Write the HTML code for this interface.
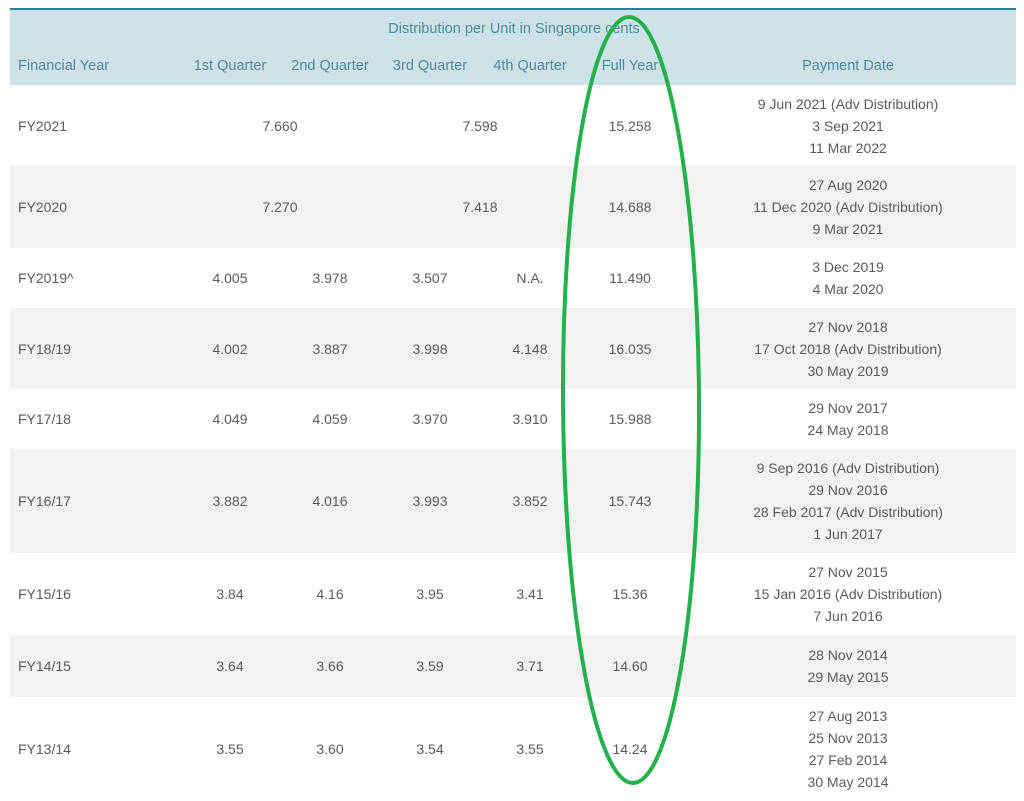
<!DOCTYPE html>
<html><head><meta charset="utf-8"><style>
body{margin:0;background:#fff;width:1024px;height:793px;overflow:hidden;position:relative;font-family:"Liberation Sans",sans-serif;font-size:14px;color:#5c5862}
table{position:absolute;left:10px;top:8px;width:1006px;border-collapse:collapse;table-layout:fixed;border-top:2px solid #2f7f93}
td,th{padding:0;text-align:center;vertical-align:middle;line-height:22px;font-weight:normal}
thead tr{background:#cde2e7;color:#4f8a9c;font-size:14.5px}
thead tr.t1{height:38px}thead tr.t2{height:38px}
td.l,th.l{text-align:left;padding-left:8px}
tr.g{background:#f2f2f2}
</style></head><body>
<table>
<colgroup><col style="width:170px"><col style="width:100px"><col style="width:100px"><col style="width:100px"><col style="width:100px"><col style="width:100px"><col style="width:336px"></colgroup>
<thead>
<tr class="t1"><th colspan="7" style="padding-left:2px">Distribution per Unit in Singapore cents</th></tr>
<tr class="t2"><th class="l">Financial Year</th><th>1st Quarter</th><th>2nd Quarter</th><th>3rd Quarter</th><th>4th Quarter</th><th>Full Year</th><th>Payment Date</th></tr>
</thead>
<tbody>
<tr style="height:81px"><td class="l">FY2021</td><td colspan="2">7.660</td><td colspan="2">7.598</td><td>15.258</td><td>9 Jun 2021 (Adv Distribution)<br>3 Sep 2021<br>11 Mar 2022</td></tr>
<tr class="g" style="height:82px"><td class="l">FY2020</td><td colspan="2">7.270</td><td colspan="2">7.418</td><td>14.688</td><td>27 Aug 2020<br>11 Dec 2020 (Adv Distribution)<br>9 Mar 2021</td></tr>
<tr style="height:60px"><td class="l">FY2019^</td><td>4.005</td><td>3.978</td><td>3.507</td><td>N.A.</td><td>11.490</td><td>3 Dec 2019<br>4 Mar 2020</td></tr>
<tr class="g" style="height:81px"><td class="l">FY18/19</td><td>4.002</td><td>3.887</td><td>3.998</td><td>4.148</td><td>16.035</td><td>27 Nov 2018<br>17 Oct 2018 (Adv Distribution)<br>30 May 2019</td></tr>
<tr style="height:60px"><td class="l">FY17/18</td><td>4.049</td><td>4.059</td><td>3.970</td><td>3.910</td><td>15.988</td><td>29 Nov 2017<br>24 May 2018</td></tr>
<tr class="g" style="height:104px"><td class="l">FY16/17</td><td>3.882</td><td>4.016</td><td>3.993</td><td>3.852</td><td>15.743</td><td>9 Sep 2016 (Adv Distribution)<br>29 Nov 2016<br>28 Feb 2017 (Adv Distribution)<br>1 Jun 2017</td></tr>
<tr style="height:82px"><td class="l">FY15/16</td><td>3.84</td><td>4.16</td><td>3.95</td><td>3.41</td><td>15.36</td><td>27 Nov 2015<br>15 Jan 2016 (Adv Distribution)<br>7 Jun 2016</td></tr>
<tr class="g" style="height:62px"><td class="l">FY14/15</td><td>3.64</td><td>3.66</td><td>3.59</td><td>3.71</td><td>14.60</td><td>28 Nov 2014<br>29 May 2015</td></tr>
<tr style="height:104px"><td class="l">FY13/14</td><td>3.55</td><td>3.60</td><td>3.54</td><td>3.55</td><td>14.24</td><td>27 Aug 2013<br>25 Nov 2013<br>27 Feb 2014<br>30 May 2014</td></tr>
</tbody></table>
<svg width="1024" height="793" style="position:absolute;left:0;top:0">
<ellipse cx="631" cy="400" rx="68" ry="383" fill="none" stroke="#22b14c" stroke-width="4" transform="rotate(-0.3 631 400)"/>
</svg>
</body></html>
